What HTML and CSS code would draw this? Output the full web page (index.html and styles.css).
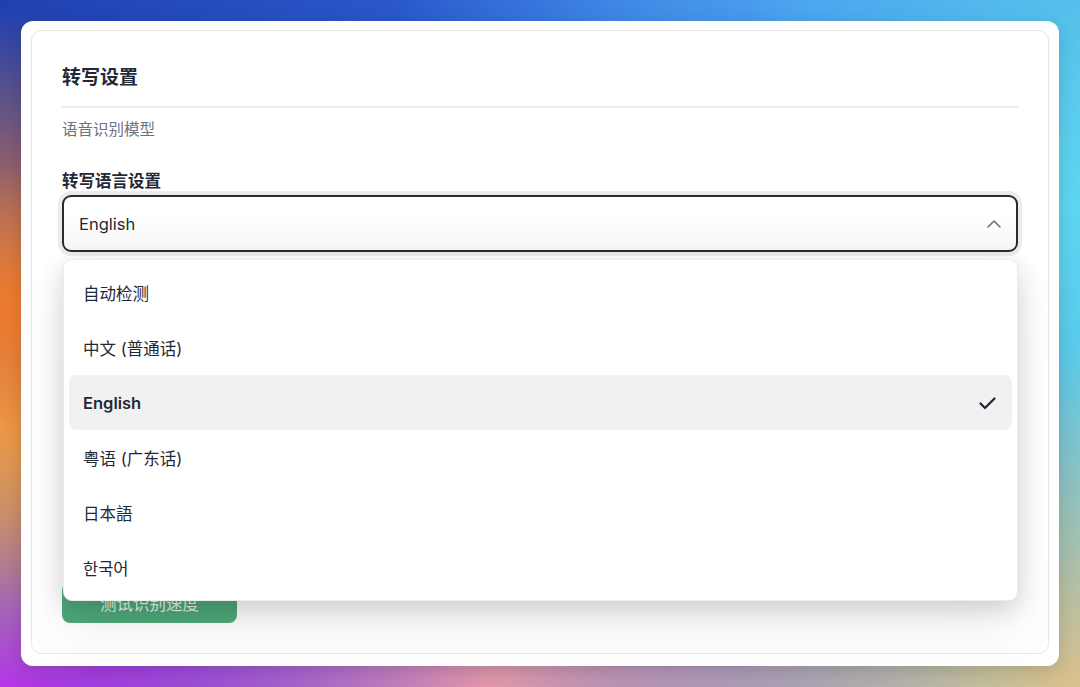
FILE: index.html
```html
<!DOCTYPE html>
<html lang="zh-CN">
<head>
    <meta charset="UTF-8">
    <meta name="viewport" content="width=device-width, initial-scale=1.0">
    <title>转写设置</title>
    <link rel="stylesheet" href="styles.css">
</head>
<body>
    <div class="window">
        <div class="panel">
            <h2 class="panel-title">转写设置</h2>
            <div class="section-hint">语音识别模型</div>

            <div class="field">
                <label class="field-label">转写语言设置</label>
                <div class="select-wrap">
                    <div class="select">
                        <span>English</span>
                        <svg class="chevron" width="16" height="16" viewBox="0 0 16 16" fill="none">
                            <path d="M2 11L8 5l6 6" stroke="#6b7280" stroke-width="1.6" stroke-linecap="round" stroke-linejoin="round"/>
                        </svg>
                    </div>

                    <ul class="dropdown">
                        <li class="option">自动检测</li>
                        <li class="option">中文 (普通话)</li>
                        <li class="option selected">
                            <span>English</span>
                            <svg width="19" height="18" viewBox="0 0 19 18" fill="none">
                                <path d="M2.5 9.5l4.5 4.5 9.5-9.5" stroke="#1f2937" stroke-width="2.3" stroke-linecap="round" stroke-linejoin="round"/>
                            </svg>
                        </li>
                        <li class="option">粤语 (广东话)</li>
                        <li class="option">日本語</li>
                        <li class="option ko">한국어</li>
                    </ul>
                </div>
            </div>

            <button class="test-btn">测试识别速度</button>
        </div>
    </div>
</body>
</html>
```

FILE: styles.css
```css
* {
    box-sizing: border-box;
}
body {
    margin: 0;
    height: 687px;
    padding: 21px;
    font-family: Inter, "Noto Sans CJK SC", sans-serif;
    color: #1f2937;
    overflow: hidden;
    background:
        radial-gradient(ellipse 420px 300px at 0% 45%, #f07a2c 0%, rgba(240, 122, 44, 0) 100%),
        radial-gradient(ellipse 300px 260px at 0% 62%, #eac46a 0%, rgba(234, 196, 106, 0) 100%),
        radial-gradient(ellipse 500px 260px at 0% 100%, #b636e8 0%, rgba(182, 54, 232, 0) 100%),
        radial-gradient(ellipse 500px 300px at 45% 100%, #e39aa8 0%, rgba(227, 154, 168, 0) 100%),
        radial-gradient(ellipse 520px 340px at 100% 100%, #dcc08c 0%, rgba(220, 192, 140, 0) 100%),
        radial-gradient(ellipse 380px 420px at 100% 30%, #5ed6f2 0%, rgba(94, 214, 242, 0) 100%),
        radial-gradient(ellipse 420px 200px at 75% 0%, #4aa0f0 0%, rgba(74, 160, 240, 0) 100%),
        linear-gradient(100deg, #2040b0 0%, #2d5fd4 45%, #3f86e0 70%, #56c0dc 100%);
}
.window {
    height: 645px;
    background: #fff;
    border-radius: 12px;
    padding: 9px 10px 12px;
    box-shadow: 0 4px 18px rgba(0, 0, 0, 0.15);
}
.panel {
    height: 100%;
    border: 1px solid #e6e6e6;
    border-radius: 10px;
    padding: 35px 30px 30px;
    display: flex;
    flex-direction: column;
}
.panel-title {
    margin: 0;
    font-size: 19px;
    font-weight: 700;
    line-height: 24px;
    padding-bottom: 16px;
    border-bottom: 2px solid #ececec;
}
.section-hint {
    margin-top: 11px;
    font-size: 15.5px;
    line-height: 22px;
    color: #6b7280;
}
.field {
    margin-top: 29px;
}
.field-label {
    display: block;
    font-size: 16.5px;
    font-weight: 700;
    line-height: 22px;
}
.select-wrap {
    position: relative;
    margin-top: 3px;
}
.select {
    height: 57px;
    border: 2px solid #2b2b2b;
    border-radius: 9px;
    padding: 0 14px 0 15px;
    display: flex;
    align-items: center;
    justify-content: space-between;
    font-size: 16.5px;
    background: linear-gradient(#fff 40%, #f6f6f6);
    box-shadow: 0 0 0 4px #ececec;
}
.dropdown {
    position: absolute;
    top: 64px;
    left: 1px;
    right: 0;
    z-index: 2;
    margin: 0;
    padding: 5px;
    list-style: none;
    background: #fff;
    border-radius: 9px;
    border: 1px solid #ececec;
    box-shadow: 0 8px 26px rgba(0, 0, 0, 0.16), 0 30px 60px rgba(0, 0, 0, 0.06);
}
.option {
    height: 55px;
    display: flex;
    align-items: center;
    justify-content: space-between;
    padding: 0 15px 0 14px;
    font-size: 16.5px;
    border-radius: 8px;
}
.option.selected {
    background: #f1f1f1;
    font-weight: 600;
}
.option.ko {
    font-family: Inter, "Noto Sans CJK KR", sans-serif;
}
.test-btn {
    margin-top: auto;
    align-self: flex-start;
    width: 175px;
    height: 40px;
    border: none;
    border-radius: 8px;
    background: #4fa97b;
    color: #e8f5ee;
    font-family: inherit;
    font-size: 16.5px;
}
```
